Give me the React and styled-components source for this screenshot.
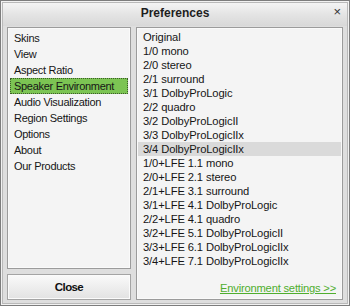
import React from "react";
import styled, { createGlobalStyle } from "styled-components";

const Global = createGlobalStyle`
  html, body { margin: 0; padding: 0; background: #d6d6d6; }
  body { width: 350px; height: 306px; overflow: hidden; font-family: "Liberation Sans", Arial, sans-serif; }
`;

const Window = styled.div`
  box-sizing: border-box;
  width: 350px;
  height: 306px;
  border: 1px solid #7d7d7d;
  box-shadow: inset 0 0 0 1px #f2f2f2, inset 0 0 0 2px #b9b9b9;
  background: #dedede;
  display: flex;
  flex-direction: column;
`;

const TitleBar = styled.div`
  position: relative;
  height: 23px;
  flex: none;
  display: flex;
  align-items: center;
  justify-content: center;
  background: linear-gradient(#f4f4f4, #e4e4e4 50%, #d8d8d8);
  margin: 2px 2px 0 2px;
`;

const Title = styled.div`
  font-weight: bold;
  font-size: 12px;
  color: #1e1e1e;
  margin-top: -4px;
`;

const CloseX = styled.div`
  position: absolute;
  right: 6px;
  top: 1px;
  font-size: 13px;
  color: #333;
`;

const Body = styled.div`
  flex: 1;
  display: grid;
  grid-template-columns: 124px 207px;
  column-gap: 5px;
  padding: 1px 0 5px 6px;
  min-height: 0;
`;

const LeftCol = styled.div`
  display: flex;
  flex-direction: column;
  gap: 5px;
  min-height: 0;
`;

const ListBox = styled.div`
  box-sizing: border-box;
  border: 1px solid #9b9b9b;
  box-shadow: inset 0 0 0 1px #fafafa;
  background: #f4f4f4;
  padding: ${(p) => p.$pad};
  display: flex;
  flex-direction: column;
  min-height: 0;
  flex: ${(p) => (p.$grow ? 1 : "none")};
`;

const NavItem = styled.div`
  box-sizing: border-box;
  height: 16px;
  line-height: 15px;
  font-size: 11px;
  letter-spacing: -0.3px;
  padding-left: 3px;
  color: #161616;
  background: ${(p) => (p.$selected ? "#7cc453" : "transparent")};
  border: 1px ${(p) => (p.$selected ? "dotted #3c5a2a" : "solid transparent")};
  white-space: nowrap;
`;

const Button = styled.div`
  box-sizing: border-box;
  height: 26px;
  flex: none;
  border: 1px solid #a4a4a4;
  box-shadow: inset 0 0 0 1px #fbfbfb;
  background: linear-gradient(#fafafa, #eeeeee 50%, #e2e2e2);
  display: flex;
  align-items: center;
  justify-content: center;
  font-weight: bold;
  font-size: 11.5px;
  letter-spacing: -0.6px;
  color: #111;
`;

const EnvItem = styled.div`
  height: 14px;
  line-height: 14px;
  font-size: 11.2px;
  letter-spacing: -0.12px;
  padding-left: 5px;
  color: #161616;
  background: ${(p) => (p.$selected ? "#dadada" : "transparent")};
  white-space: nowrap;
`;

const Spacer = styled.div`
  flex: 1;
`;

const Link = styled.div`
  align-self: flex-end;
  margin: 0 5px 4px 0;
  font-size: 11.2px;
  letter-spacing: -0.2px;
  color: #4fae2e;
  text-decoration: underline;
`;

const nav = [
  "Skins",
  "View",
  "Aspect Ratio",
  "Speaker Environment",
  "Audio Visualization",
  "Region Settings",
  "Options",
  "About",
  "Our Products",
];

const envs = [
  "Original",
  "1/0 mono",
  "2/0 stereo",
  "2/1 surround",
  "3/1 DolbyProLogic",
  "2/2 quadro",
  "3/2 DolbyProLogicII",
  "3/3 DolbyProLogicIIx",
  "3/4 DolbyProLogicIIx",
  "1/0+LFE 1.1 mono",
  "2/0+LFE 2.1 stereo",
  "2/1+LFE 3.1 surround",
  "3/1+LFE 4.1 DolbyProLogic",
  "2/2+LFE 4.1 quadro",
  "3/2+LFE 5.1 DolbyProLogicII",
  "3/3+LFE 6.1 DolbyProLogicIIx",
  "3/4+LFE 7.1 DolbyProLogicIIx",
];

export default function App() {
  return (
    <>
      <Global />
      <Window>
        <TitleBar>
          <Title>Preferences</Title>
          <CloseX>×</CloseX>
        </TitleBar>
        <Body>
          <LeftCol>
            <ListBox $grow $pad="2px 2px">
              {nav.map((n) => (
                <NavItem key={n} $selected={n === "Speaker Environment"}>
                  {n}
                </NavItem>
              ))}
            </ListBox>
            <Button>Close</Button>
          </LeftCol>
          <ListBox $pad="2px 1px 1px">
            {envs.map((e, i) => (
              <EnvItem key={e + i} $selected={i === 8}>
                {e}
              </EnvItem>
            ))}
            <Spacer />
            <Link>Environment settings &gt;&gt;</Link>
          </ListBox>
        </Body>
      </Window>
    </>
  );
}
